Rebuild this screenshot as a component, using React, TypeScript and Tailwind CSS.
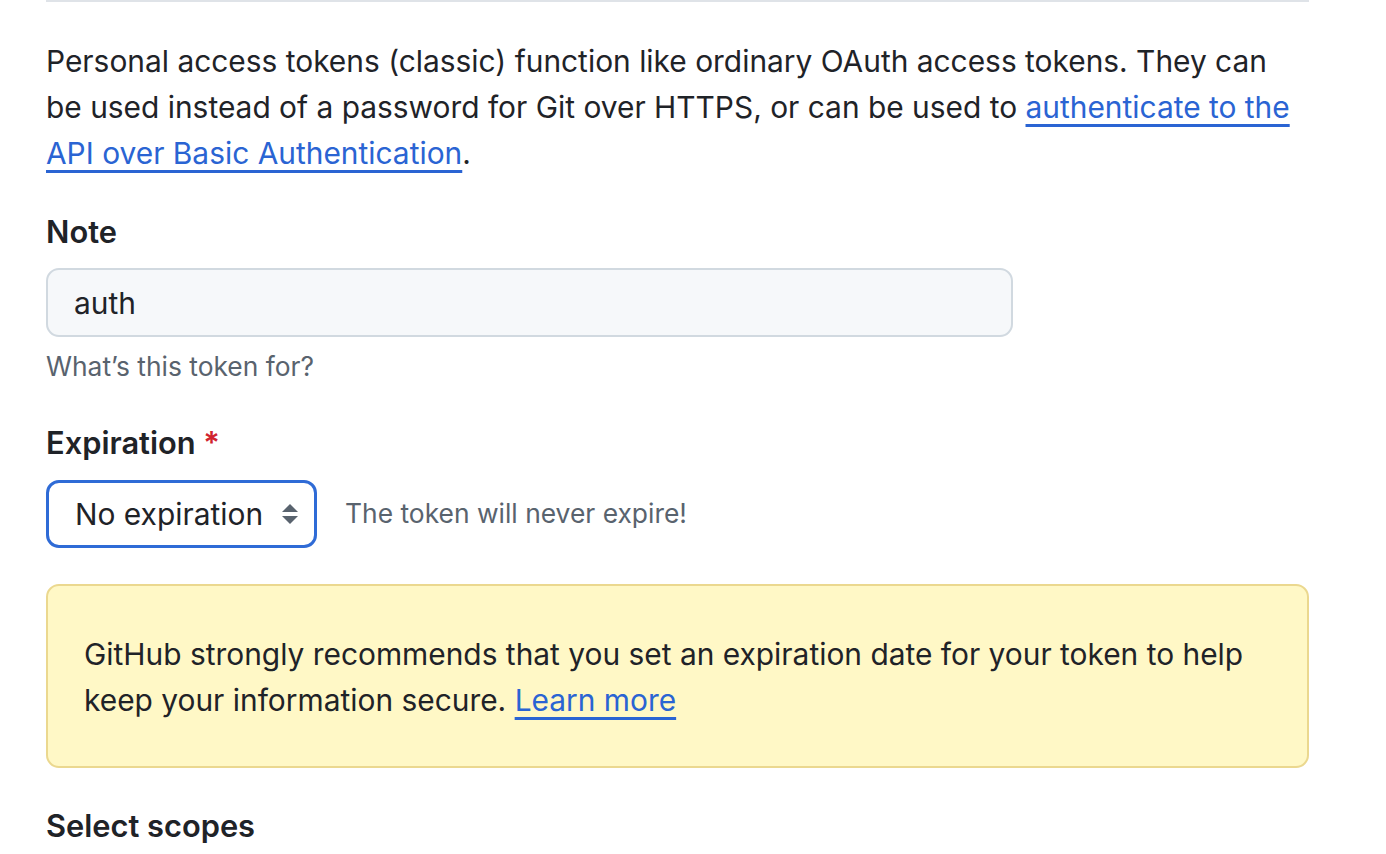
import { useState } from 'react';

const font = { fontFamily: 'Inter, "Noto Sans", sans-serif' };

export default function App() {
  const [note, setNote] = useState('auth');
  const [expiration, setExpiration] = useState('none');

  return (
    <div className="min-h-screen bg-white text-[#1f2328]" style={font}>
      <div className="ml-[46px] w-[1263px]">
        <div className="h-[2px] bg-[#dfe3e8]" />

        <p className="mt-[36px] text-[29.9px] leading-[46px]">
          Personal access tokens (classic) function like ordinary OAuth access tokens. They can be used instead of a
          password for Git over HTTPS, or can be used to{' '}
          <a href="#" className="text-[#2a64d3] underline decoration-[3px] underline-offset-[6px]">
            authenticate to the API over Basic Authentication
          </a>
          .
        </p>

        <div className="mt-[33px]">
          <label className="block text-[30.8px] font-semibold leading-[46px]">Note</label>
          <input
            value={note}
            onChange={(e) => setNote(e.target.value)}
            className="mt-[13px] h-[69px] w-[967px] rounded-[13px] border-2 border-[#d1d9e0] bg-[#f6f8fa] px-[26px] text-[29.9px] outline-none"
          />
          <p className="mt-[9px] text-[26.4px] leading-[40px] text-[#59636e]">What’s this token for?</p>
        </div>

        <div className="mt-[34px]">
          <label className="block text-[30.8px] font-semibold leading-[46px]">
            Expiration <span className="text-[#d1242f]">*</span>
          </label>
          <div className="mt-[14px] flex items-center gap-[28px]">
            <div className="relative">
              <select
                value={expiration}
                onChange={(e) => setExpiration(e.target.value)}
                className="h-[68px] w-[271px] appearance-none rounded-[13px] border-[3px] border-[#2f6bd6] bg-white pl-[26px] pr-[36px] text-[29.9px] outline-none"
              >
                <option value="7">7 days</option>
                <option value="30">30 days</option>
                <option value="none">No expiration</option>
              </select>
              <svg
                className="pointer-events-none absolute right-[18px] top-1/2 -translate-y-1/2"
                width="18"
                height="22"
                viewBox="0 0 18 22"
                fill="#59636e"
              >
                <path d="M9 1 L17 9 L1 9 Z" />
                <path d="M1 13 L17 13 L9 21 Z" />
              </svg>
            </div>
            <span className="text-[26.4px] text-[#59636e]">The token will never expire!</span>
          </div>
        </div>

        <div className="mt-[36px] rounded-[13px] border-2 border-[#ebd88f] bg-[#fff8c6] px-[36px] pb-[43px] pt-[45px] text-[29.9px] leading-[46px]">
          GitHub strongly recommends that you set an expiration date for your token to help keep your information
          secure.{' '}
          <a href="#" className="text-[#2a64d3] underline decoration-[3px] underline-offset-[6px]">
            Learn more
          </a>
        </div>

        <h3 className="mt-[35px] text-[30.8px] font-semibold leading-[46px]">Select scopes</h3>
      </div>
    </div>
  );
}
